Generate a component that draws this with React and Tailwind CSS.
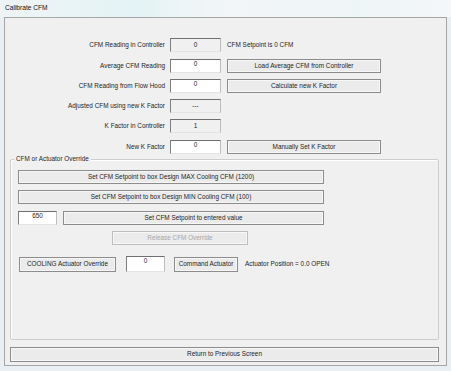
import React from "react";

const font = { fontFamily: '"Liberation Sans", Arial, sans-serif' };

function Btn({ children, className = "", disabled = false }) {
  return (
    <div
      className={
        "flex items-center justify-center border bg-[#ebebeb] shadow-[inset_0_0_0_1px_#f7f7f7] " +
        (disabled ? "border-[#bdbdbd] text-[#a8a8a8] " : "border-[#8c8c8c] text-[#1e1e1e] ") +
        className
      }
    >
      {children}
    </div>
  );
}

function Box({ value, readOnly = false, className = "" }) {
  return (
    <div
      className={
        "flex justify-center border-t border-l border-r border-b border-t-[#6f6f6f] border-l-[#7f7f7f] border-r-[#bdbdbd] border-b-[#e4e4e4] text-[#1e1e1e] " +
        (readOnly ? "bg-[#f0f0f0] items-center " : "bg-white items-start pt-[1px] ") +
        className
      }
    >
      {value}
    </div>
  );
}

function Row({ label, value, readOnly, button, extra, className = "" }) {
  return (
    <div className={"flex items-center h-[14px] " + className}>
      <div className="w-[160px] text-right text-[#1e1e1e] whitespace-nowrap">{label}</div>
      <Box value={value} readOnly={readOnly} className="ml-[5px] w-[51px] h-[14px]" />
      {button && <Btn className="ml-[6px] w-[154px] h-[14px]">{button}</Btn>}
      {extra && <div className="ml-[6px] text-[#1e1e1e] whitespace-nowrap">{extra}</div>}
    </div>
  );
}

export default function App() {
  return (
    <div
      className="w-[451px] h-[371px] overflow-hidden bg-[#e9eff2] text-[6.4px] leading-none"
      style={font}
    >
      <div className="h-[17px] flex items-center pl-[5px] bg-[linear-gradient(90deg,#eef4f6_0%,#e4f3f5_30%,#f3f6f8_50%,#eef5f7_80%,#f5f7f9_100%)] text-[#111] text-[6.6px]">
        Calibrate CFM
      </div>
      <div className="ml-[4px] w-[443px] h-[349px] border border-[#a6a6a6] bg-[#f0f0f0] flex flex-col">
        <div className="pt-[20px] flex flex-col">
          <Row label="CFM Reading in Controller" value="0" readOnly extra="CFM Setpoint is 0 CFM" />
          <Row label="Average CFM Reading" value="0" button="Load Average CFM from Controller" className="mt-[7px]" />
          <Row label="CFM Reading from Flow Hood" value="0" button="Calculate new K Factor" className="mt-[6px]" />
          <Row label="Adjusted CFM using new K Factor" value="---" readOnly className="mt-[6px]" />
          <Row label="K Factor in Controller" value="1" readOnly className="mt-[6px]" />
          <Row label="New K Factor" value="0" button="Manually Set K Factor" className="mt-[7px]" />
        </div>

        <div className="relative ml-[5px] mt-[5px] w-[429px] h-[181px] border border-[#cdcdcd] rounded-[2px] shadow-[inset_1px_1px_0_#ffffff]">
          <div className="absolute left-[3px] top-[-4px] px-[2px] bg-[#f0f0f0] text-[#1e1e1e] whitespace-nowrap">
            CFM or Actuator Override
          </div>
          <div className="pl-[7px] pt-[10px] flex flex-col">
            <Btn className="w-[306px] h-[14px]">Set CFM Setpoint to box Design MAX Cooling CFM (1200)</Btn>
            <Btn className="mt-[6px] w-[306px] h-[14px]">Set CFM Setpoint to box Design MIN Cooling CFM (100)</Btn>
            <div className="mt-[7px] flex items-center h-[14px]">
              <Box value="650" className="w-[39px] h-[14px]" />
              <Btn className="ml-[6px] w-[261px] h-[14px]">Set CFM Setpoint to entered value</Btn>
            </div>
            <Btn disabled className="ml-[94px] mt-[6px] w-[136px] h-[14px]">Release CFM Override</Btn>
            <div className="mt-[11px] flex items-center">
              <Btn className="ml-[1px] w-[97px] h-[15px]">COOLING Actuator Override</Btn>
              <Box value="0" className="ml-[10px] w-[39px] h-[16px]" />
              <Btn className="ml-[9px] w-[64px] h-[15px]">Command Actuator</Btn>
              <div className="ml-[7px] text-[#1e1e1e] whitespace-nowrap">Actuator Position = 0.0 OPEN</div>
            </div>
          </div>
        </div>

        <Btn className="ml-[5px] mt-[7px] w-[429px] h-[15px]">Return to Previous Screen</Btn>
      </div>
    </div>
  );
}
